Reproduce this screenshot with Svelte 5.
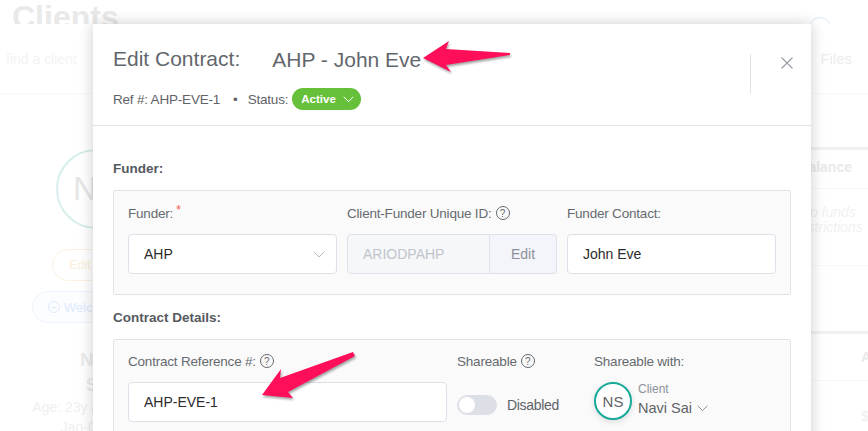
<script>
  // faded page behind the modal, then the modal itself
  const funderLabel = 'Funder:';
</script>

<div class="page">
  <div class="top">
    <div class="title-row">
      <h1>Clients</h1>
      <span class="bell"></span>
    </div>
    <div class="toolbar">
      <span class="find">find a client</span>
      <span class="files">Files</span>
    </div>
  </div>

  <div class="main">
    <aside class="profile">
      <div class="big-avatar">NS</div>
      <span class="pill edit">Edit</span>
      <span class="pill welcome"><i></i>Welcome</span>
      <div class="name">Navi<br />Sai</div>
      <div class="age">Age: 23y / Non-binary<br />Jan-01-2000</div>
    </aside>
    <section class="side">
      <div class="block">
        <b>Balance</b>
        <em>no funds<br />restrictions</em>
      </div>
      <div class="block lower">
        <b>A</b>
        <span>$</span>
      </div>
    </section>
  </div>

  <div class="modal">
    <header>
      <div class="head-text">
        <div class="title"><span>Edit Contract:</span><span class="who">AHP - John Eve</span></div>
        <div class="meta">
          <span>Ref #: AHP-EVE-1</span>
          <span class="dot">•</span>
          <span>Status:</span>
          <span class="status">Active
            <svg width="11" height="7" viewBox="0 0 11 7"><path d="M.7.8l4.8 4.8L10.3.8" /></svg>
          </span>
        </div>
      </div>
      <div class="close">
        <svg width="14" height="14" viewBox="0 0 14 14"><path d="M1.5 1.5l11 11M12.5 1.5l-11 11" /></svg>
      </div>
    </header>

    <div class="body">
      <h3>Funder:</h3>
      <div class="panel funder">
        <div class="field">
          <label>{funderLabel}<sup>*</sup></label>
          <div class="input select">AHP
            <svg width="12" height="7" viewBox="0 0 12 7"><path d="M.7.7L6 6 11.3.7" /></svg>
          </div>
        </div>
        <div class="field">
          <label>Client-Funder Unique ID: <span class="help">?</span></label>
          <div class="group">
            <div class="input disabled">ARIODPAHP</div>
            <div class="addon">Edit</div>
          </div>
        </div>
        <div class="field">
          <label>Funder Contact:</label>
          <div class="input">John Eve</div>
        </div>
      </div>

      <h3 class="second">Contract Details:</h3>
      <div class="panel details">
        <div class="field">
          <label>Contract Reference #: <span class="help">?</span></label>
          <div class="input">AHP-EVE-1</div>
        </div>
        <div class="field">
          <label>Shareable <span class="help">?</span></label>
          <div class="toggle-row">
            <span class="toggle"><span class="knob"></span></span>
            <span>Disabled</span>
          </div>
        </div>
        <div class="field">
          <label>Shareable with:</label>
          <div class="person">
            <span class="avatar">NS</span>
            <div class="who-col">
              <small>Client</small>
              <span>Navi Sai
                <svg width="11" height="7" viewBox="0 0 11 7"><path d="M.7.8l4.8 4.8L10.3.8" /></svg>
              </span>
            </div>
          </div>
        </div>
      </div>
    </div>
  </div>

  <svg class="arrow a1" width="100" height="45" viewBox="0 0 100 45">
    <path d="M3 20L29 3 26 11 90 15 90 17 26 27 31 34z" />
  </svg>
  <svg class="arrow a2" width="105" height="60" viewBox="0 0 105 60">
    <path d="M2 47L21 21 20 30 93 4 95 8 28 44 33 50z" />
  </svg>
</div>

<style>
  :global(body) {
    margin: 0;
    background: #fff;
  }

  .page {
    position: relative;
    width: 868px;
    height: 431px;
    overflow: hidden;
    font-family: "Liberation Sans", Arial, sans-serif;
    font-size: 14px;
    color: #5f6368;
    background: #fff;
  }

  .top {
    height: 93px;
    border-bottom: 1px solid #f7f7f7;
  }

  .title-row {
    display: flex;
    justify-content: space-between;
    height: 24px;
    overflow: hidden;
    padding: 0 37px 0 12px;
  }

  h1 {
    margin: 0;
    font-size: 32px;
    line-height: 34px;
    color: #e9e9e9;
  }

  .toolbar {
    display: flex;
    align-items: center;
    justify-content: space-between;
    padding: 26px 16px 0 6px;
  }

  .find {
    font-size: 14px;
    color: #f3f3f3;
  }

  .bell {
    box-sizing: border-box;
    width: 22px;
    height: 22px;
    margin-top: 17px;
    border: 1px solid #d9e9fb;
    border-radius: 50%;
  }

  .files {
    font-size: 15px;
    color: #ececec;
  }

  .main {
    display: flex;
    justify-content: space-between;
  }

  .profile {
    width: 200px;
    display: flex;
    flex-direction: column;
    align-items: center;
    padding-top: 55px;
  }

  .big-avatar {
    width: 80px;
    height: 80px;
    margin-right: 8px;
    box-sizing: border-box;
    border: 2px solid #d6efec;
    border-radius: 50%;
    display: flex;
    align-items: center;
    justify-content: center;
    font-size: 33px;
    color: #e6e6e6;
  }

  .pill {
    box-sizing: border-box;
    display: flex;
    align-items: center;
    justify-content: center;
    border-radius: 16px;
    height: 32px;
  }

  .pill.edit {
    width: 96px;
    margin-top: 20px;
    padding-right: 40px;
    border: 1px solid #fbf2e3;
    color: #fbeeda;
    font-size: 12.5px;
  }

  .pill.welcome {
    width: 136px;
    margin-top: 10px;
    padding-left: 15px;
    justify-content: flex-start;
    border: 1px solid #eef5fe;
    background: #fcfdff;
    color: #dceafc;
    font-size: 13px;
  }

  .pill.welcome i {
    display: flex;
    align-items: center;
    justify-content: center;
    width: 10px;
    height: 10px;
    margin-right: 4px;
    border: 1px solid #dceafc;
    border-radius: 50%;
  }

  .pill.welcome i::after {
    content: '';
    width: 6px;
    height: 1px;
    background: #dceafc;
  }

  .name {
    margin-top: 24px;
    font-size: 19px;
    line-height: 25px;
    font-weight: 700;
    text-align: center;
    color: #ececec;
  }

  .age {
    margin-top: 0;
    font-size: 14px;
    line-height: 20px;
    white-space: nowrap;
    text-align: center;
    color: #efefef;
  }

  .side {
    width: 130px;
    padding-top: 53px;
    box-sizing: border-box;
    color: #eee;
  }

  .block {
    height: 184px;
    border-top: 3px solid #f0f0f0;
    box-sizing: border-box;
    padding-top: 7px;
  }

  .block b {
    display: block;
    box-sizing: border-box;
    height: 32px;
    border-bottom: 1px solid #f8f8f8;
    padding-right: 16px;
    font-size: 14px;
    line-height: 20px;
    text-align: right;
    color: #eaeaea;
  }

  .block em {
    display: block;
    margin: 16px 0 0 52px;
    padding-bottom: 30px;
    font-size: 14px;
    line-height: 15px;
    text-align: center;
    color: #f1f1f1;
    white-space: nowrap;
    border-bottom: 1px solid #f8f8f8;
  }

  .block.lower {
    padding-top: 13px;
  }

  .block.lower b {
    height: 34px;
    padding: 0 0 0 123px;
    text-align: left;
  }

  .block.lower span {
    display: block;
    margin: 27px 0 0 123px;
    color: #efefef;
  }

  .modal {
    position: absolute;
    left: 93px;
    top: 24px;
    width: 718px;
    height: 500px;
    background: #fff;
    box-shadow: 0 0 14px rgba(0, 0, 0, 0.2);
  }

  header {
    height: 102px;
    box-sizing: border-box;
    border-bottom: 1px solid #e2e2e2;
    display: flex;
    justify-content: space-between;
  }

  .head-text {
    padding: 23px 0 0 20px;
  }

  .title {
    display: flex;
    font-size: 21px;
    line-height: 24px;
    color: #63676c;
  }

  .who {
    margin-left: 32px;
    margin-top: 1px;
  }

  .meta {
    display: flex;
    align-items: center;
    margin-top: 16px;
    height: 22px;
    font-size: 13.5px;
    letter-spacing: -0.2px;
  }

  .dot {
    margin: 0 10px 0 13px;
  }

  .status {
    display: flex;
    align-items: center;
    justify-content: space-between;
    box-sizing: border-box;
    width: 69px;
    height: 22px;
    margin-left: 4px;
    padding: 0 7px 0 9px;
    border-radius: 11px;
    background: #66c03a;
    color: #fff;
    font-size: 11.5px;
    font-weight: 700;
    letter-spacing: 0;
  }

  .status svg path {
    fill: none;
    stroke: #fff;
    stroke-width: 1;
  }

  .close {
    width: 61px;
    height: 40px;
    margin: 30px 0 0;
    border-left: 1px solid #e2e2e2;
    display: flex;
    justify-content: center;
    padding-top: 2px;
    padding-right: 3px;
    box-sizing: border-box;
  }

  .close svg {
    margin-left: 15px;
  }

  .close path {
    stroke: #9a9ea6;
    stroke-width: 1.1;
    fill: none;
  }

  .body {
    padding: 35px 20px 0;
  }

  h3 {
    margin: 0 0 13px;
    font-size: 13.5px;
    line-height: 16px;
    color: #55595e;
  }

  h3.second {
    margin: 15px 0 13px;
  }

  .panel {
    display: grid;
    column-gap: 10px;
    box-sizing: border-box;
    padding: 14px 14px 19px;
    background: #fafafa;
    border: 1px solid #e2e2e2;
    border-radius: 2px;
  }

  .funder {
    grid-template-columns: 209px 210px 209px;
    height: 105px;
  }

  .details {
    grid-template-columns: 319px 127px 182px;
    height: 160px;
    padding-top: 13px;
  }

  label {
    display: flex;
    align-items: center;
    gap: 4px;
    height: 16px;
    margin-bottom: 13px;
    font-size: 13.5px;
    letter-spacing: -0.2px;
    color: #666a6f;
    white-space: nowrap;
  }

  sup {
    margin: -6px 0 0 -1px;
    color: #f5573f;
    font-size: 12px;
    line-height: 10px;
  }

  .help {
    display: inline-flex;
    align-items: center;
    justify-content: center;
    width: 12px;
    height: 12px;
    border: 1px solid #666a6f;
    border-radius: 50%;
    font-size: 10px;
    letter-spacing: 0;
  }

  .input {
    box-sizing: border-box;
    height: 40px;
    display: flex;
    align-items: center;
    padding: 0 15px;
    background: #fff;
    border: 1px solid #dfe1ea;
    border-radius: 4px;
    font-size: 14px;
    color: #2b2b2b;
  }

  .select {
    justify-content: space-between;
    padding-right: 11px;
  }

  .select svg path {
    fill: none;
    stroke: #b9bcc4;
    stroke-width: 1;
  }

  .group {
    display: flex;
  }

  .input.disabled {
    flex: 1;
    background: #f6f7f9;
    border-radius: 4px 0 0 4px;
    color: #c0c4cc;
    min-width: 0;
  }

  .addon {
    box-sizing: border-box;
    width: 67px;
    height: 40px;
    display: flex;
    align-items: center;
    justify-content: center;
    background: #f3f5fa;
    border: 1px solid #dfe1ea;
    border-left: 0;
    border-radius: 0 4px 4px 0;
    color: #8d929b;
  }

  .toggle-row {
    display: flex;
    align-items: center;
    gap: 10px;
    height: 24px;
    margin-top: 24px;
    letter-spacing: -0.3px;
    color: #5f6368;
  }

  .toggle {
    display: flex;
    align-items: center;
    width: 40px;
    height: 20px;
    padding-left: 2px;
    box-sizing: border-box;
    border-radius: 10px;
    background: #dcdfe6;
  }

  .knob {
    width: 16px;
    height: 16px;
    border-radius: 50%;
    background: #fff;
  }

  .person {
    display: flex;
    gap: 6px;
  }

  .avatar {
    box-sizing: border-box;
    width: 38px;
    height: 38px;
    display: flex;
    align-items: center;
    justify-content: center;
    background: #fff;
    border: 2px solid #17a999;
    border-radius: 50%;
    font-size: 15px;
    color: #5f6368;
    box-shadow: 0 2px 6px rgba(0, 0, 0, 0.12);
  }

  .who-col {
    display: flex;
    flex-direction: column;
    margin-top: 1px;
  }

  .who-col small {
    font-size: 12px;
    line-height: 13px;
    color: #8d929b;
  }

  .who-col span {
    display: flex;
    align-items: center;
    gap: 5px;
    margin-top: 3px;
    font-size: 14.5px;
    line-height: 18px;
    color: #5f6368;
  }

  .who-col svg path {
    fill: none;
    stroke: #7f838a;
    stroke-width: 0.9;
  }

  .arrow {
    position: absolute;
    overflow: visible;
    filter: drop-shadow(1px 2px 1px rgba(0, 0, 0, 0.35));
  }

  .arrow path {
    fill: #ff0f5a;
  }

  .a1 {
    left: 420px;
    top: 38px;
  }

  .a2 {
    left: 260px;
    top: 348px;
  }
</style>
